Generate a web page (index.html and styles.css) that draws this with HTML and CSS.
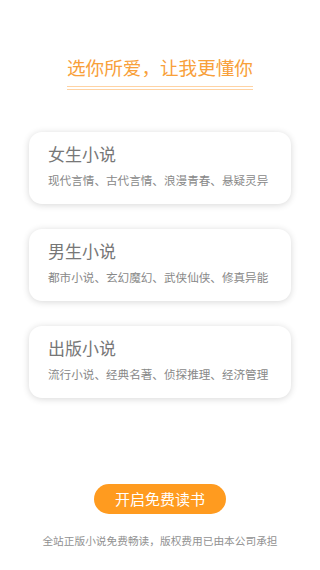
FILE: index.html
```html
<!DOCTYPE html>
<html lang="zh">
<head>
<meta charset="utf-8">
<link rel="stylesheet" href="styles.css">
</head>
<body>
<div class="page">
  <header class="head">
    <h1 class="title">选你所爱，让我更懂你</h1>
    <div class="rule"></div>
  </header>
  <div class="cards">
    <div class="card">
      <div class="card-title">女生小说</div>
      <div class="card-sub">现代言情、古代言情、浪漫青春、悬疑灵异</div>
    </div>
    <div class="card">
      <div class="card-title">男生小说</div>
      <div class="card-sub">都市小说、玄幻魔幻、武侠仙侠、修真异能</div>
    </div>
    <div class="card">
      <div class="card-title">出版小说</div>
      <div class="card-sub">流行小说、经典名著、侦探推理、经济管理</div>
    </div>
  </div>
  <div class="btn-wrap">
    <button class="btn">开启免费读书</button>
  </div>
  <p class="foot">全站正版小说免费畅读，版权费用已由本公司承担</p>
</div>
</body>
</html>
```
FILE: styles.css
```css
* { box-sizing: border-box; }
html, body {
  margin: 0;
  padding: 0;
  background: #fff;
  font-family: "Noto Sans CJK SC", "Noto Sans", sans-serif;
}
.page {
  width: 320px;
  height: 570px;
  display: flex;
  flex-direction: column;
}
.head {
  padding-top: 53px;
  display: flex;
  flex-direction: column;
  align-items: center;
}
.title {
  margin: 0;
  font-size: 18.6px;
  line-height: 28px;
  font-weight: 400;
  color: #f8a03a;
}
.rule {
  margin-top: 5px;
  width: 186px;
  height: 4px;
  border-top: 1px solid #ffd3a3;
  border-bottom: 1px solid #ffd3a3;
}
.cards {
  margin-top: 42px;
  padding: 0 29px;
  display: flex;
  flex-direction: column;
  gap: 25px;
}
.card {
  background: #fff;
  border-radius: 13px;
  box-shadow: 0 1px 7px rgba(0, 0, 0, 0.16);
  padding: 10px 19px 16px;
}
.card-title {
  font-size: 17px;
  line-height: 24px;
  color: #777;
}
.card-sub {
  margin-top: 6px;
  font-size: 11.6px;
  line-height: 16px;
  color: #888;
  white-space: nowrap;
}
.btn-wrap {
  margin-top: 86px;
  display: flex;
  justify-content: center;
}
.btn {
  width: 132px;
  height: 30px;
  border: 0;
  border-radius: 15px;
  background: #ff9b1f;
  color: #fff;
  font-family: inherit;
  font-size: 15px;
  padding: 0;
  line-height: 30px;
}
.foot {
  margin: 19px 0 0;
  text-align: center;
  font-size: 10.7px;
  line-height: 16px;
  color: #919191;
}
```
